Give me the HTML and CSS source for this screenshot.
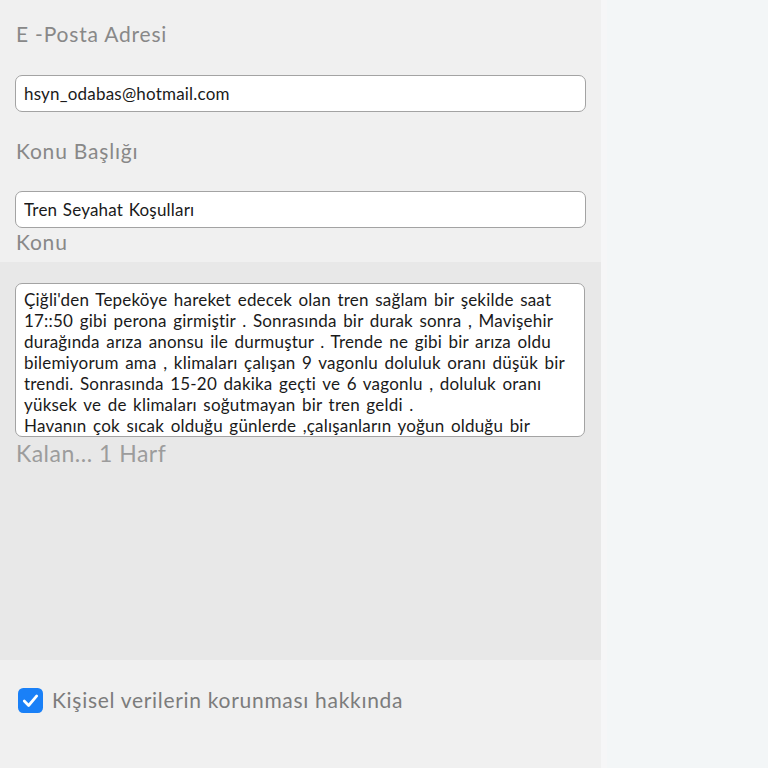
FILE: index.html
```html
<!DOCTYPE html>
<html lang="tr">
<head>
<meta charset="utf-8">
<title>İletişim</title>
<link rel="stylesheet" href="styles.css">
</head>
<body>
<div class="page">
  <form class="panel">
    <section class="top">
      <label class="label">E -Posta Adresi</label>
      <input class="field field-a" type="text" value="hsyn_odabas@hotmail.com">
      <label class="label label-b">Konu Başlığı</label>
      <input class="field field-b" type="text" value="Tren Seyahat Koşulları">
      <label class="label label-c">Konu</label>
    </section>
    <section class="middle">
      <textarea class="area" wrap="off">Çiğli'den Tepeköye hareket edecek olan tren sağlam bir şekilde saat
17::50 gibi perona girmiştir . Sonrasında bir durak sonra , Mavişehir
durağında arıza anonsu ile durmuştur . Trende ne gibi bir arıza oldu
bilemiyorum ama , klimaları çalışan 9 vagonlu doluluk oranı düşük bir
trendi. Sonrasında 15-20 dakika geçti ve 6 vagonlu , doluluk oranı
yüksek ve de klimaları soğutmayan bir tren geldi .
Havanın çok sıcak olduğu günlerde ,çalışanların yoğun olduğu bir
saatte</textarea>
      <div class="counter">Kalan... 1 Harf</div>
    </section>
    <section class="bottom">
      <label class="check-row">
        <span class="check">
          <svg viewBox="0 0 24 24" width="25" height="25"><rect x="0" y="0" width="24" height="24" rx="5" fill="#1a80f7"/><path d="M6 12.5 L10.2 16.8 L18 7.6" fill="none" stroke="#fff" stroke-width="2.6" stroke-linecap="round" stroke-linejoin="round"/></svg>
        </span>
        <span class="check-text">Kişisel verilerin korunması hakkında</span>
      </label>
    </section>
    <div class="rest"></div>
  </form>
  <div class="side"></div>
</div>
</body>
</html>
```
FILE: styles.css
```css
html, body {
  margin: 0;
  padding: 0;
}
body {
  background: #f3f6f7;
  font-family: Lato, "Open Sans", sans-serif;
}
.page {
  display: flex;
  height: 768px;
}
.panel {
  width: 601px;
  display: flex;
  flex-direction: column;
  background: #f0f0f0;
  border-right: 6px solid #f6f6f7;
  margin: 0;
}
.top {
  height: 262px;
  box-sizing: border-box;
  padding: 20px 15px 0 15px;
  display: flex;
  flex-direction: column;
}
.label {
  display: block;
  font-size: 21px;
  line-height: 27px;
  letter-spacing: 0.8px;
  color: #888888;
  padding-left: 1px;
}
.field {
  height: 37px;
  box-sizing: border-box;
  width: 571px;
  border: 1.5px solid #a3a3a3;
  border-radius: 7px;
  background: #fff;
  padding: 0 8px;
  font-family: inherit;
  font-size: 17px;
  letter-spacing: 0.2px;
  word-spacing: 1px;
  color: #1a1a1a;
  outline: none;
}
.field-a {
  margin-top: 28px;
}
.field-b {
  margin-top: 27px;
}
.label-b {
  margin-top: 25px;
}
.label-c {
  margin-top: 0;
}
.middle {
  height: 398px;
  background: #e8e8e8;
  box-sizing: border-box;
  padding: 21px 15px 0 15px;
  display: flex;
  flex-direction: column;
}
.area {
  width: 570px;
  height: 154px;
  box-sizing: border-box;
  border: 1.5px solid #a3a3a3;
  border-radius: 7px;
  background: #fff;
  padding: 5px 8px 0 8px;
  font-family: inherit;
  font-size: 17px;
  line-height: 21px;
  letter-spacing: 0.2px;
  word-spacing: 2px;
  color: #1a1a1a;
  resize: none;
  overflow: hidden;
  white-space: pre;
  outline: none;
  margin: 0;
}
.counter {
  margin-top: 2px;
  font-size: 23px;
  line-height: 28px;
  letter-spacing: 0.5px;
  color: #9c9c9c;
  padding-left: 1px;
}
.bottom {
  height: 78px;
  background: #f0f0f0;
  box-sizing: border-box;
  padding: 27px 18px 0 18px;
}
.check-row {
  display: flex;
  align-items: center;
  gap: 9px;
}
.check {
  display: block;
  width: 25px;
  height: 25px;
}
.check svg {
  display: block;
}
.check-text {
  font-size: 21px;
  line-height: 26px;
  letter-spacing: 0.7px;
  color: #7c7c7c;
}
.rest {
  flex: 1;
  background: #f0f0f0;
}
.side {
  flex: 1;
}
```
